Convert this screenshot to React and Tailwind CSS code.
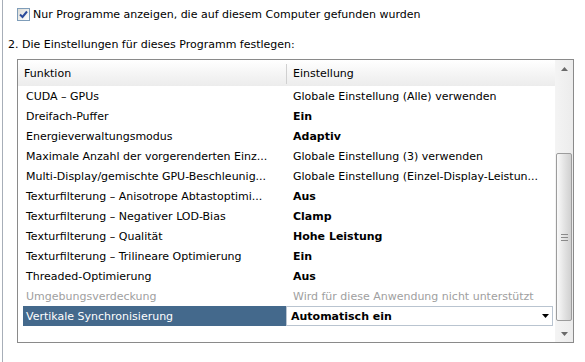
import React from 'react';

const rows = [
    { name: 'CUDA – GPUs', value: 'Globale Einstellung (Alle) verwenden' },
    { name: 'Dreifach-Puffer', value: 'Ein', bold: true },
    { name: 'Energieverwaltungsmodus', value: 'Adaptiv', bold: true },
    { name: 'Maximale Anzahl der vorgerenderten Einz...', value: 'Globale Einstellung (3) verwenden' },
    { name: 'Multi-Display/gemischte GPU-Beschleunig...', value: 'Globale Einstellung (Einzel-Display-Leistun...' },
    { name: 'Texturfilterung – Anisotrope Abtastoptimi...', value: 'Aus', bold: true },
    { name: 'Texturfilterung – Negativer LOD-Bias', value: 'Clamp', bold: true },
    { name: 'Texturfilterung – Qualität', value: 'Hohe Leistung', bold: true },
    { name: 'Texturfilterung – Trilineare Optimierung', value: 'Ein', bold: true },
    { name: 'Threaded-Optimierung', value: 'Aus', bold: true },
    { name: 'Umgebungsverdeckung', value: 'Wird für diese Anwendung nicht unterstützt', disabled: true },
];

const Triangle = ({ up, className }) => (
    <svg width="7" height="4" viewBox="0 0 7 4" className={className}>
        <path d={up ? 'M3.5 0 L7 4 L0 4 Z' : 'M0 0 L7 0 L3.5 4 Z'} fill="currentColor" />
    </svg>
);

const Scrollbar = () => (
    <div className="w-[18px] flex flex-col bg-gradient-to-r from-[#f4f4f4] to-[#ececec]">
        {/* up */}
        <div className="h-[17px] flex items-center justify-center">
            <Triangle up className="text-[#6a6a6a]" />
        </div>
        {/* track + thumb */}
        <div className="flex-1 flex flex-col">
            <div className="mt-[76px] ml-[1px] w-[16px] h-[168px] border border-[#9c9c9c] rounded-[2px] bg-gradient-to-r from-[#fafafa] via-[#e4e4e4] to-[#d0d0d0] flex items-center justify-center">
                <div className="flex flex-col gap-[2px]">
                    <div className="w-[7px] h-px bg-[#8a8a8a]" />
                    <div className="w-[7px] h-px bg-[#8a8a8a]" />
                    <div className="w-[7px] h-px bg-[#8a8a8a]" />
                </div>
            </div>
        </div>
        {/* down */}
        <div className="h-[17px] flex items-center justify-center">
            <Triangle className="text-[#6a6a6a]" />
        </div>
    </div>
);

export default function App() {
    return (
        <div className="w-[585px] h-[362px] bg-white flex text-[11px] text-black font-['DejaVu_Sans',Verdana,sans-serif] overflow-hidden">
            <div className="w-[2px]" />
            <div className="w-px bg-[#a7aeb8]" />
            <div className="flex-1 flex flex-col">
                {/* checkbox row */}
                <div className="mt-[8px] ml-[14px] h-[13px] flex items-center">
                    <div className="w-[13px] h-[13px] border border-[#7f9db9] bg-gradient-to-br from-[#dcdcd7] to-white flex items-center justify-center">
                        <svg width="11" height="11" viewBox="0 0 11 11">
                            <path d="M2 5.5 L4.5 8 L9 2.5" stroke="#2a4a9a" strokeWidth="2" fill="none" />
                        </svg>
                    </div>
                    <span className="ml-[3px] leading-[13px]">Nur Programme anzeigen, die auf diesem Computer gefunden wurden</span>
                </div>

                <div className="mt-[17px] ml-[5px] h-[14px] leading-[14px]">
                    2. Die Einstellungen für dieses Programm festlegen:
                </div>

                {/* table */}
                <div className="mt-[7px] ml-[14px] w-[557px] h-[284px] border border-[#8a8a8a] flex">
                    <div className="flex-1 flex flex-col">
                        {/* header */}
                        <div className="h-[26px] pt-[2px] flex bg-gradient-to-b from-white to-[#ececec]">
                            <div className="w-[268px] pl-[6px] flex items-center">Funktion</div>
                            <div className="w-px bg-[#d0d0d0] my-[2px]" />
                            <div className="flex-1 pl-[6px] flex items-center">Einstellung</div>
                        </div>

                        {rows.map((r) => (
                            <div key={r.name} className="h-[20px] pt-px ml-[5px] flex leading-[19px]">
                                <div className={`w-[263px] pl-[3px] whitespace-nowrap ${r.disabled ? 'text-[#a0a0a0]' : ''}`}>
                                    {r.name}
                                </div>
                                <div className={`pl-[7px] whitespace-nowrap ${r.bold ? 'font-bold' : ''} ${r.disabled ? 'text-[#a0a0a0]' : ''}`}>
                                    {r.value}
                                </div>
                            </div>
                        ))}

                        {/* selected row */}
                        <div className="h-[20px] ml-[5px] flex">
                            <div className="w-[263px] pl-[3px] pt-px leading-[19px] bg-[#44698c] text-white whitespace-nowrap">
                                Vertikale Synchronisierung
                            </div>
                            <div className="w-[267px] border border-[#b9c4d0] flex items-center justify-between pl-[4px] pr-[3px]">
                                <span className="font-bold leading-[18px] pt-px">Automatisch ein</span>
                                <Triangle className="text-black" />
                            </div>
                        </div>
                    </div>
                    <Scrollbar />
                </div>
            </div>
        </div>
    );
}
